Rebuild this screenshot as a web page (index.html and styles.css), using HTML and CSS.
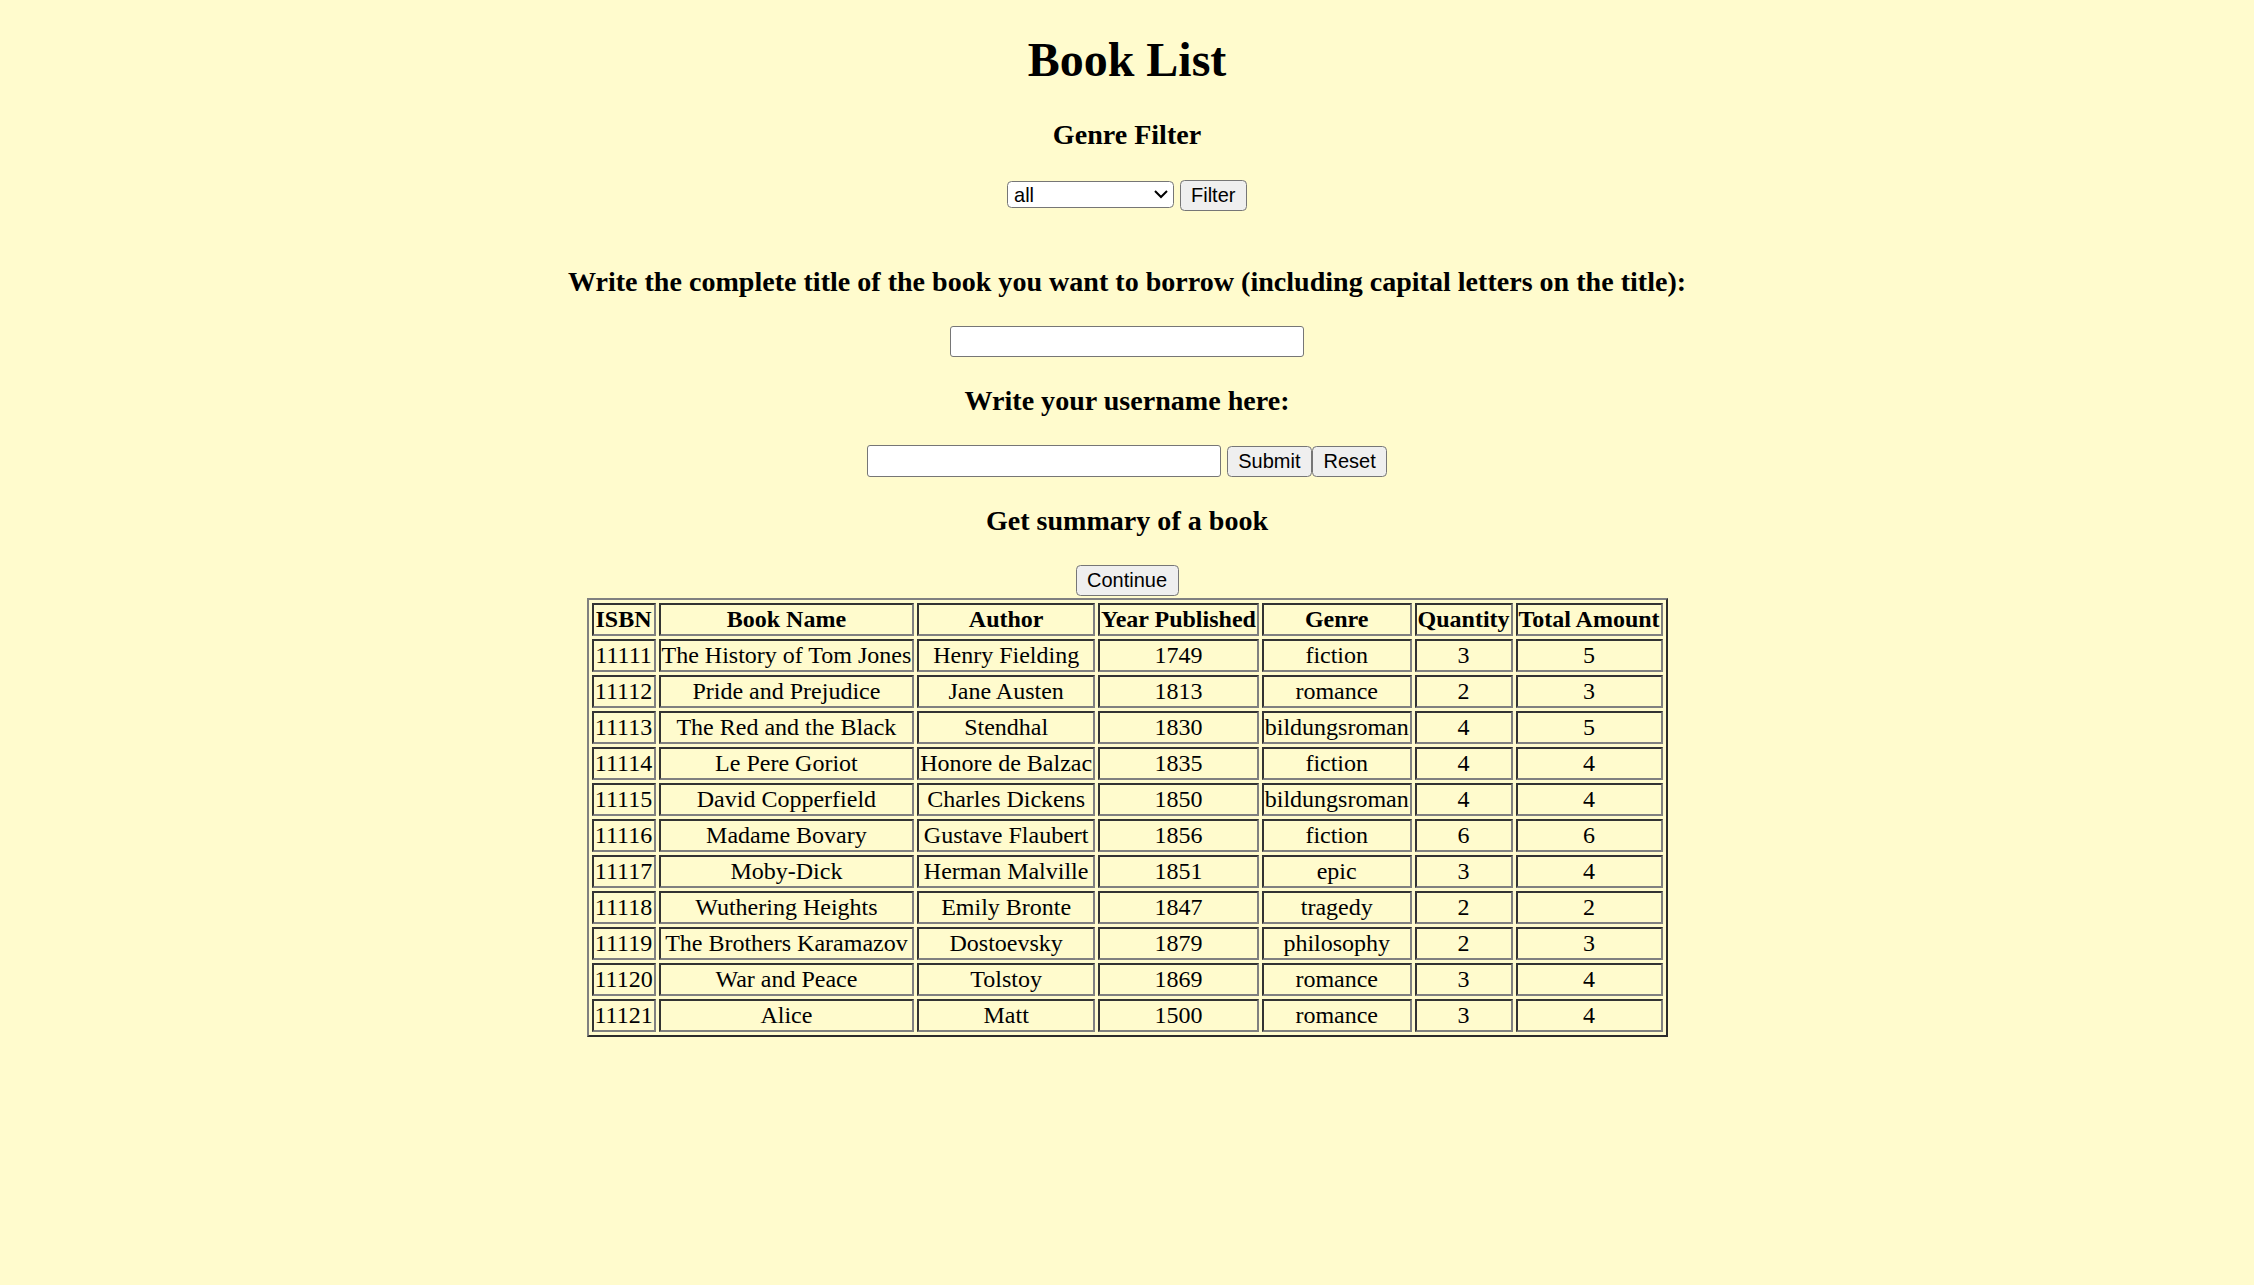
FILE: index.html
```html
<!DOCTYPE html>
<html lang="en">
<head>
<meta charset="utf-8">
<title>Book List</title>
<link rel="stylesheet" href="styles.css">
</head>
<body class="page">
<h1 class="title">Book List</h1>
<h3 class="subtitle">Genre Filter</h3>
<form class="filter-form">
<select class="genre-select" name="genre">
<option>all</option>
<option>fiction</option>
<option>romance</option>
<option>bildungsroman</option>
<option>epic</option>
<option>tragedy</option>
<option>philosophy</option>
</select>
<button class="btn" type="button">Filter</button>
</form>
<form class="borrow-form">
<h3 class="subtitle">Write the complete title of the book you want to borrow (including capital letters on the title):</h3>
<div class="line"><input class="text-input" type="text" name="title"></div>
<h3 class="subtitle">Write your username here:</h3>
<div class="line"><input class="text-input" type="text" name="username"> <button class="btn" type="button">Submit</button><button class="btn" type="reset">Reset</button></div>
</form>
<h3 class="subtitle">Get summary of a book</h3>
<div class="line"><button class="btn" type="button">Continue</button></div>
<table class="books">
<thead>
<tr><th>ISBN</th><th>Book Name</th><th>Author</th><th>Year Published</th><th>Genre</th><th>Quantity</th><th>Total Amount</th></tr>
</thead>
<tbody>
<tr><td>11111</td><td>The History of Tom Jones</td><td>Henry Fielding</td><td>1749</td><td>fiction</td><td>3</td><td>5</td></tr>
<tr><td>11112</td><td>Pride and Prejudice</td><td>Jane Austen</td><td>1813</td><td>romance</td><td>2</td><td>3</td></tr>
<tr><td>11113</td><td>The Red and the Black</td><td>Stendhal</td><td>1830</td><td>bildungsroman</td><td>4</td><td>5</td></tr>
<tr><td>11114</td><td>Le Pere Goriot</td><td>Honore de Balzac</td><td>1835</td><td>fiction</td><td>4</td><td>4</td></tr>
<tr><td>11115</td><td>David Copperfield</td><td>Charles Dickens</td><td>1850</td><td>bildungsroman</td><td>4</td><td>4</td></tr>
<tr><td>11116</td><td>Madame Bovary</td><td>Gustave Flaubert</td><td>1856</td><td>fiction</td><td>6</td><td>6</td></tr>
<tr><td>11117</td><td>Moby-Dick</td><td>Herman Malville</td><td>1851</td><td>epic</td><td>3</td><td>4</td></tr>
<tr><td>11118</td><td>Wuthering Heights</td><td>Emily Bronte</td><td>1847</td><td>tragedy</td><td>2</td><td>2</td></tr>
<tr><td>11119</td><td>The Brothers Karamazov</td><td>Dostoevsky</td><td>1879</td><td>philosophy</td><td>2</td><td>3</td></tr>
<tr><td>11120</td><td>War and Peace</td><td>Tolstoy</td><td>1869</td><td>romance</td><td>3</td><td>4</td></tr>
<tr><td>11121</td><td>Alice</td><td>Matt</td><td>1500</td><td>romance</td><td>3</td><td>4</td></tr>
</tbody>
</table>
</body>
</html>
```
FILE: styles.css
```css
html {
  zoom: 1.5;
  background: #fffbcd;
}
.page {
  margin: 0 8px 8px;
  padding-top: 0.1px;
  background: #fffbcd;
  color: #000;
  font-family: "Liberation Serif", "Times New Roman", serif;
  font-size: 16px;
  text-align: center;
}
.title {
  font-size: 32px;
  font-weight: bold;
  margin: 21.44px 0;
}
.subtitle {
  font-size: 18.72px;
  font-weight: bold;
  margin: 18.72px 0;
}
.filter-form {
  margin: 0;
  padding-bottom: 18px;
}
.borrow-form {
  margin: 0;
}
.line {
  margin: 0;
}
.btn {
  font-family: "Liberation Sans", Arial, sans-serif;
  font-size: 13.333px;
  line-height: normal;
  color: #000;
  background: #efefef;
  border: 1px solid #767676;
  border-radius: 3px;
  padding: 2px 7px;
  margin: 0;
  vertical-align: baseline;
}
.genre-select {
  font-family: "Liberation Sans", Arial, sans-serif;
  font-size: 13.333px;
  width: 111px;
  height: 18px;
  background: #fff;
  color: #000;
  border: 1px solid #767676;
  border-radius: 3px;
  margin: 0;
}
.text-input {
  box-sizing: border-box;
  width: 236px;
  height: 21px;
  font-family: "Liberation Sans", Arial, sans-serif;
  font-size: 13.333px;
  background: #fff;
  border: 1px solid #767676;
  border-radius: 2px;
  padding: 1px 2px;
  margin: 0;
}
.books {
  margin: 1px auto 0;
  border-collapse: separate;
  border-spacing: 2px;
  border: 1.34px solid;
  border-color: #808080 #2b2b2b #2b2b2b #808080;
}
.books th,
.books td {
  border: 1.34px solid;
  border-color: #333 #808080 #808080 #333;
  padding: 1px 0.62px;
  text-align: center;
  font-size: 16px;
  line-height: 17.34px;
}
.books th {
  font-weight: bold;
}
```
